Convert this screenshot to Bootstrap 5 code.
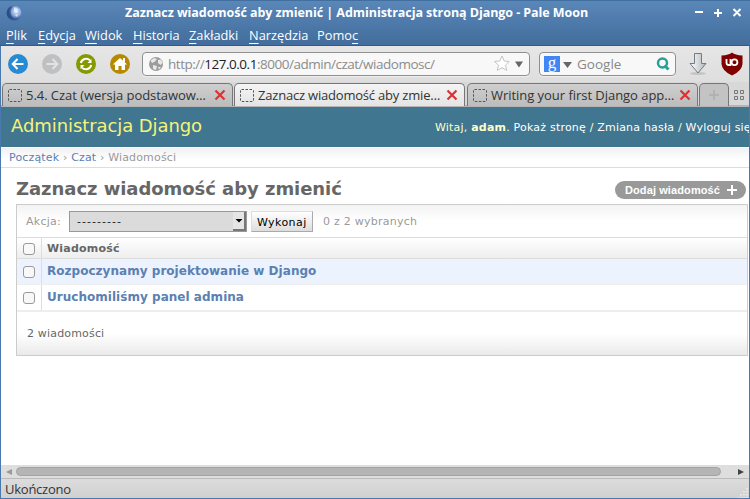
<!DOCTYPE html>
<html lang="pl">
<head>
<meta charset="utf-8">
<title>Zaznacz wiadomość aby zmienić | Administracja stroną Django</title>
<link rel="stylesheet" href="https://cdn.jsdelivr.net/npm/bootstrap@5.3.0/dist/css/bootstrap.min.css">
<style>
body{width:750px;height:499px;overflow:hidden;font:14px/18px "Open Sans","Noto Sans",sans-serif;color:#333;background:#fff}
.window{width:750px;height:499px;border:solid #4a7aad;border-width:0 1px 1px}
.window *{flex-shrink:0}
.window svg{display:block}
.top-frame{height:46px;margin:0 -1px;background:linear-gradient(#5987b8,#426d9c);border-top:1px solid #416f9f;border-bottom:1px solid #315b8c;color:#fff}
.title-row{height:24px;padding-left:6px}
.title-text{width:480px;margin-left:103px;font-weight:700;font-size:12.5px;letter-spacing:-.06px;white-space:nowrap}
.win-buttons{margin-left:88px}
.menu-row{height:19px;padding-left:6px;font-size:12.8px}
.menu-row span{white-space:nowrap}
.menu-row u{text-underline-offset:3px;text-decoration-thickness:1px}
.m1{width:32px}.m2{width:47px}.m3{width:48px}.m4{width:56px}.m5{width:60px}.m6{width:68px}
.toolbar-row{height:36px;padding-left:7px;background:linear-gradient(#e6e6e6,#dedede)}
.nav-icon{width:34px}
.field{height:24px;border:1px solid #8f8f8f;border-radius:4px;background:#f8f8f8;box-shadow:0 1px 0 #eee}
.address{width:388px;margin-left:-2px;padding-left:6px}
.url{width:330px;padding-left:5px;font-size:13.5px;letter-spacing:-.48px;color:#8c8c8c;white-space:nowrap}
.url b{font-weight:400;color:#222}
.star{margin-right:3px}
.search{width:137px;margin-left:9px;padding-left:4px;color:#888;font-size:13.5px}
.search-hint{width:80px;padding-left:1px}
.google-g{width:16px;height:16px;background:#4285f4;color:#fff;font:17px/13px "Liberation Serif",serif;text-align:center}
.ublock{margin-left:9px}
.tab-strip{height:25px;padding-top:1px;background:#d8d8d8;border-bottom:2px solid #b5b5b5}
.browser-tab{height:23px;width:231px;margin-left:1px;margin-right:1px;border:1px solid #777;border-bottom:0;border-radius:5px 5px 0 0;background:linear-gradient(#cfcfcf,#bcbcbc);padding-left:5px;font-size:13px;white-space:nowrap}
.browser-tab+.browser-tab{margin-left:0}
.browser-tab.third{margin-left:1px}
.browser-tab.current{background:linear-gradient(#f4f4f4,#e4e4e4)}
.tab-label{width:191px;padding-left:3px}
.t1{letter-spacing:-.04px}.t2{letter-spacing:-.2px}.t3{letter-spacing:-.04px}
.browser-tab.tab-new{width:30px;padding-left:8px;background:#c3c3c3}
.list-tabs{margin:6px 0 0 3px}
.site{font-family:"DejaVu Sans",sans-serif;font-size:11px;line-height:14px;width:748px;height:358px;overflow:hidden;background:#fff}
.site-header{height:40px;padding-left:10px;background:#417690;color:#ffc;white-space:nowrap}
.site-name{font-size:18px;line-height:22px;letter-spacing:-.08px;color:#f4f379;width:424px;padding-bottom:2px}
.user-tools{letter-spacing:.2px;padding-top:1px}
.user-tools a{color:#fff;text-decoration:none}
.crumbs{height:21px;padding-left:8px;background:linear-gradient(#f1f1f1,#fff 60%);border-bottom:1px solid #ddd;border-top:1px solid #fff;color:#999;letter-spacing:.16px}
.crumbs a,.result a{color:#5b80b2;text-decoration:none}
.content-head{height:36px;padding-left:15px}
.content-head h1{width:599px;margin:10px 0 0;font-size:18px;line-height:22px;font-weight:700;letter-spacing:-.05px;color:#666}
.add-link{width:131px;height:18px;margin-top:13px;padding-left:10px;border-radius:9px;background:#999;color:#fff;font:bold 11px/14px "Liberation Sans",sans-serif;letter-spacing:.1px;white-space:nowrap}
.add-label{width:101px}
.changelist{width:732px;height:152px;margin-left:15px;border:1px solid #ccc}
.actions{height:33px;padding-left:9px;background:linear-gradient(#f3f3f3,#fff 50%);border-bottom:1px solid #ddd;color:#999;letter-spacing:.25px}
.actions>span{padding-top:2px}
.actions>span:first-child{width:43px}
.action-pick{width:178px;height:21px;border:1px solid #999;background:#dbdbdb;color:#222;padding-left:7px}
.dashes{letter-spacing:1.04px;padding-top:2px}
.pick-arrow{width:13px;height:19px;background:#e5e5e5;border:solid #777;border-width:0 2px 2px 0}
.go{width:62px;height:21px;margin-left:4px;border:1px solid;border-color:#ddd #aaa #aaa #ddd;background:linear-gradient(#fff,#ddd);color:#000;font-size:11px;letter-spacing:.42px;padding:3px 0 0 5px;text-align:left}
.counter{margin-left:10px}
.result{font-weight:700;font-size:12px}
.result .pick{width:25px;height:100%;border-right:1px solid #ddd;padding-left:6px;padding-top:1px}
.result .form-check-input{width:12px;height:12px;margin:0;border:1px solid #999;border-radius:3px;background:#f8f8f8;box-shadow:none}
.result-head{height:21px;background:linear-gradient(#fff,#eee);border-bottom:1px solid #ddd;color:#666;font-size:11px;letter-spacing:.2px}
.result-row{height:26px;border-bottom:1px solid #eee;letter-spacing:.03px}
.result-row.tinted{background:#edf3fe}
.result-name{padding-left:5px;padding-bottom:2px}
.result-head .result-name{padding-top:1px;padding-bottom:0}
.paginator{height:44px;padding-left:10px;color:#666;background:linear-gradient(#fff 50%,#eaeaea);border-top:1px solid #eee;letter-spacing:.17px}
.scroll-row{height:14px;padding-left:5px;background:#dedede;border-bottom:1px solid #bbb}
.thumb{width:705px;height:9px;margin-left:4px;border:1px solid #a3a3a3;border-radius:5px;background:#b5b5b5}
.scroll-end{margin-left:17px}
.status{height:19px;padding-left:4px;background:linear-gradient(#dcdcdc,#d0d0d0);font-size:13px;letter-spacing:-.25px}
</style>
<script src="https://cdn.jsdelivr.net/npm/bootstrap@5.3.0/dist/js/bootstrap.bundle.min.js"></script>
</head>
<body>
<div class="window">
  <header class="top-frame">
    <div class="title-row d-flex align-items-center">
      <svg width="16" height="16" viewBox="0 0 16 16"><defs><radialGradient id="moon" cx=".65" cy=".4"><stop stop-color="#d4e2f8"/><stop offset=".6" stop-color="#8cace0"/><stop offset="1" stop-color="#345a98"/></radialGradient></defs><circle cx="8" cy="8" r="7.500" fill="url(#moon)"/><path d="M4 2Q0 5 1 10Q3 14 7 14Q4 9 5 5L6 2Z" fill="#1d3d76" opacity=".4"/><path d="M8 2l4 2-1 4-3-1zM9 10l3-1-1 3z" fill="#fff" opacity=".6"/></svg>
      <span class="title-text">Zaznacz wiadomość aby zmienić | Administracja stroną Django - Pale Moon</span>
      <svg class="win-buttons" width="60" height="14" viewBox="0 0 60 14" stroke="#fff" stroke-width="2" fill="none"><path d="M2 6h8M21 7h8M25 3v8M40.500 3l7 7M47.500 3l-7 7"/></svg>
    </div>
    <nav class="menu-row d-flex align-items-center"><span class="m1"><u>P</u>lik</span><span class="m2"><u>E</u>dycja</span><span class="m3"><u>W</u>idok</span><span class="m4"><u>H</u>istoria</span><span class="m5"><u>Z</u>akładki</span><span class="m6"><u>N</u>arzędzia</span><span>Pomo<u>c</u></span></nav>
  </header>
  <div class="toolbar-row d-flex align-items-center">
    <div class="nav-icon"><svg width="20" height="20" viewBox="0 0 20 20"><circle cx="10" cy="10" r="10" fill="#268bd2"/><path d="M15.500 10H5M9.500 5L4.700 10l4.800 5" stroke="#fff" stroke-width="2" fill="none"/></svg></div>
    <div class="nav-icon"><svg width="20" height="20" viewBox="0 0 20 20"><circle cx="10" cy="10" r="10" fill="#bec0c1"/><path d="M4.500 10H15M10.500 5l4.800 5-4.800 5" stroke="#e3e3e3" stroke-width="2" fill="none"/></svg></div>
    <div class="nav-icon"><svg width="20" height="20" viewBox="0 0 20 20"><circle cx="10" cy="10" r="10" fill="#859900"/><path d="M4.800 9a5.400 5.400 0 0 1 9.200-2.600M15.200 11a5.400 5.400 0 0 1-9.200 2.600" stroke="#fff" stroke-width="2" fill="none"/><path d="M15.500 5v4h-4zM4.500 15v-4h4z" fill="#fff"/></svg></div>
    <div class="nav-icon"><svg width="20" height="20" viewBox="0 0 20 20"><circle cx="10" cy="10" r="10" fill="#b58900"/><path d="M2.800 10.500L10 4l7.200 6.500H15V16h-3.500v-4h-3v4H5v-5.500z" fill="#fff"/><path d="M13 4h2v4h-2z" fill="#fff"/></svg></div>
    <div class="field address d-flex align-items-center">
      <svg width="14" height="14" viewBox="0 0 14 14"><circle cx="7" cy="7" r="7" fill="#9c9c9c"/><path d="M1.500 3.500L5 1l3 1-2 2.500L3 6zM9 3l3-.5 1.500 3.500-2 2L9 6zM4 8l4 1-1 4-3-1zM9 10l3 0-2 2.500z" fill="#e8e8e8"/></svg>
      <span class="url">http://<b>127.0.0.1</b>:8000/admin/czat/wiadomosc/</span>
      <svg class="star" width="18" height="18" viewBox="0 0 18 18"><path d="M11 1l2.200 5 5 .5-3.700 3.600 1.200 5.300L11 12.700l-4.700 2.700 1.200-5.300-4-3.600 5.300-.5z" transform="translate(-2)" fill="#fff" stroke="#c4c4c4"/></svg>
      <svg width="10" height="8" viewBox="0 0 10 8"><path d="M1 1.500h8L5 7.500z" fill="#666"/></svg>
    </div>
    <div class="field search d-flex align-items-center">
      <span class="google-g">g</span>
      <svg width="16" height="10" viewBox="0 0 16 10"><path d="M3 3h9L7.500 9z" fill="#666"/></svg>
      <span class="search-hint">Google</span>
      <svg width="14" height="14" viewBox="0 0 14 14"><circle cx="6.500" cy="6" r="4.500" stroke="#26a096" stroke-width="2.500" fill="none"/><path d="M8.500 8.500l4 4" stroke="#26a096" stroke-width="3"/></svg>
    </div>
    <svg class="ms-2" width="28" height="24" viewBox="0 0 28 24"><defs><linearGradient id="down"><stop stop-color="#fff"/><stop offset="1" stop-color="#aeb5b9"/></linearGradient></defs><ellipse cx="14" cy="21.500" rx="8" ry="1.500" fill="#c2c2c2"/><path d="M10.500 1.500h7v10h4.500L14 21 6 11.500h4.500z" fill="url(#down)" stroke="#747b80"/></svg>
    <svg class="ublock" width="22" height="24" viewBox="0 0 22 24"><path d="M11 .5Q14 3 21.500 3.500V12Q21 19 11 23.500Q1 19 .5 12V3.500Q8 3 11 .5z" fill="#800000"/><path d="M5.500 7v3.500q0 2.500 2.200 2.500H9.500V7" stroke="#fff" stroke-width="1.800" fill="none"/><circle cx="13.500" cy="10.200" r="2.900" stroke="#fff" stroke-width="1.800" fill="none"/></svg>
  </div>
  <div class="tab-strip d-flex">
    <div class="browser-tab d-flex align-items-center"><svg width="15" height="15" viewBox="0 0 15 15"><rect x=".5" y="1.500" width="13" height="12" rx="1" fill="none" stroke="#555" stroke-dasharray="2.500 1.500"/></svg><span class="tab-label t1">5.4. Czat (wersja podstawow…</span><svg width="12" height="12" viewBox="0 0 12 12"><path d="M1.500 1.500l9 9M10.500 1.500l-9 9" stroke="#dc3232" stroke-width="2.200"/></svg></div>
    <div class="browser-tab current d-flex align-items-center"><svg width="15" height="15" viewBox="0 0 15 15"><rect x=".5" y="1.500" width="13" height="12" rx="1" fill="none" stroke="#555" stroke-dasharray="2.500 1.500"/></svg><span class="tab-label t2">Zaznacz wiadomość aby zmie…</span><svg width="12" height="12" viewBox="0 0 12 12"><path d="M1.500 1.500l9 9M10.500 1.500l-9 9" stroke="#dc3232" stroke-width="2.200"/></svg></div>
    <div class="browser-tab third d-flex align-items-center"><svg width="15" height="15" viewBox="0 0 15 15"><rect x=".5" y="1.500" width="13" height="12" rx="1" fill="none" stroke="#555" stroke-dasharray="2.500 1.500"/></svg><span class="tab-label t3">Writing your first Django app…</span><svg width="12" height="12" viewBox="0 0 12 12"><path d="M1.500 1.500l9 9M10.500 1.500l-9 9" stroke="#dc3232" stroke-width="2.200"/></svg></div>
    <div class="browser-tab tab-new d-flex align-items-center"><svg width="12" height="12" viewBox="0 0 12 12"><path d="M1 6h10M6 1v10" stroke="#b2b2b2" stroke-width="2"/></svg></div>
    <svg class="list-tabs" width="12" height="12" viewBox="0 0 12 12"><path d="M1.500 1.500h3v3h-3zM7.500 1.500h3v3h-3zM1.500 7.500h3v3h-3zM7.500 7.500h3v3h-3z" fill="none" stroke="#777"/></svg>
  </div>
  <main class="site">
    <div class="site-header d-flex align-items-center"><span class="site-name">Administracja Django</span><span class="user-tools">Witaj, <strong>adam</strong>. <a href="#">Pokaż stronę</a> / <a href="#">Zmiana hasła</a> / <a href="#">Wyloguj się</a></span></div>
    <div class="crumbs d-flex align-items-center"><span><a href="#">Początek</a> › <a href="#">Czat</a> › Wiadomości</span></div>
    <div class="content-head d-flex align-items-start"><h1>Zaznacz wiadomość aby zmienić</h1><a class="add-link d-flex align-items-center text-decoration-none" href="#"><span class="add-label">Dodaj wiadomość</span><svg width="12" height="12" viewBox="0 0 12 12"><path d="M1 6h10M6 1v10" stroke="#fff" stroke-width="2"/></svg></a></div>
    <div class="changelist">
      <div class="actions d-flex align-items-center"><span>Akcja:</span><div class="action-pick d-flex justify-content-between align-items-center"><span class="dashes">---------</span><span class="pick-arrow d-flex align-items-center justify-content-center"><svg width="8" height="5" viewBox="0 0 8 5"><path d="M.5 1h7L4 4.500z"/></svg></span></div><button class="go">Wykonaj</button><span class="counter">0 z 2 wybranych</span></div>
      <div class="result result-head d-flex align-items-center"><span class="pick d-flex align-items-center"><input class="form-check-input" type="checkbox"></span><span class="result-name">Wiadomość</span></div>
      <div class="result result-row tinted d-flex align-items-center"><span class="pick d-flex align-items-center"><input class="form-check-input" type="checkbox"></span><a class="result-name" href="#">Rozpoczynamy projektowanie w Django</a></div>
      <div class="result result-row d-flex align-items-center"><span class="pick d-flex align-items-center"><input class="form-check-input" type="checkbox"></span><a class="result-name" href="#">Uruchomiliśmy panel admina</a></div>
      <div class="paginator d-flex align-items-center">2 wiadomości</div>
    </div>
  </main>
  <div class="scroll-row d-flex align-items-center"><svg width="6" height="6" viewBox="0 0 6 6"><path d="M6 0v6L0 3z" fill="#999"/></svg><div class="thumb"></div><svg class="scroll-end" width="6" height="6" viewBox="0 0 6 6"><path d="M0 0v6l6-3z" fill="#444"/></svg></div>
  <footer class="status d-flex align-items-center justify-content-between"><span>Ukończono</span><svg class="align-self-end" width="11" height="11" viewBox="0 0 11 11"><path d="M9 1v10M6 4v7M3 7v4M0 10v1" stroke="#eee" stroke-width="1.500" stroke-dasharray="1.500 1.500"/></svg></footer>
</div>
</body>
</html>
